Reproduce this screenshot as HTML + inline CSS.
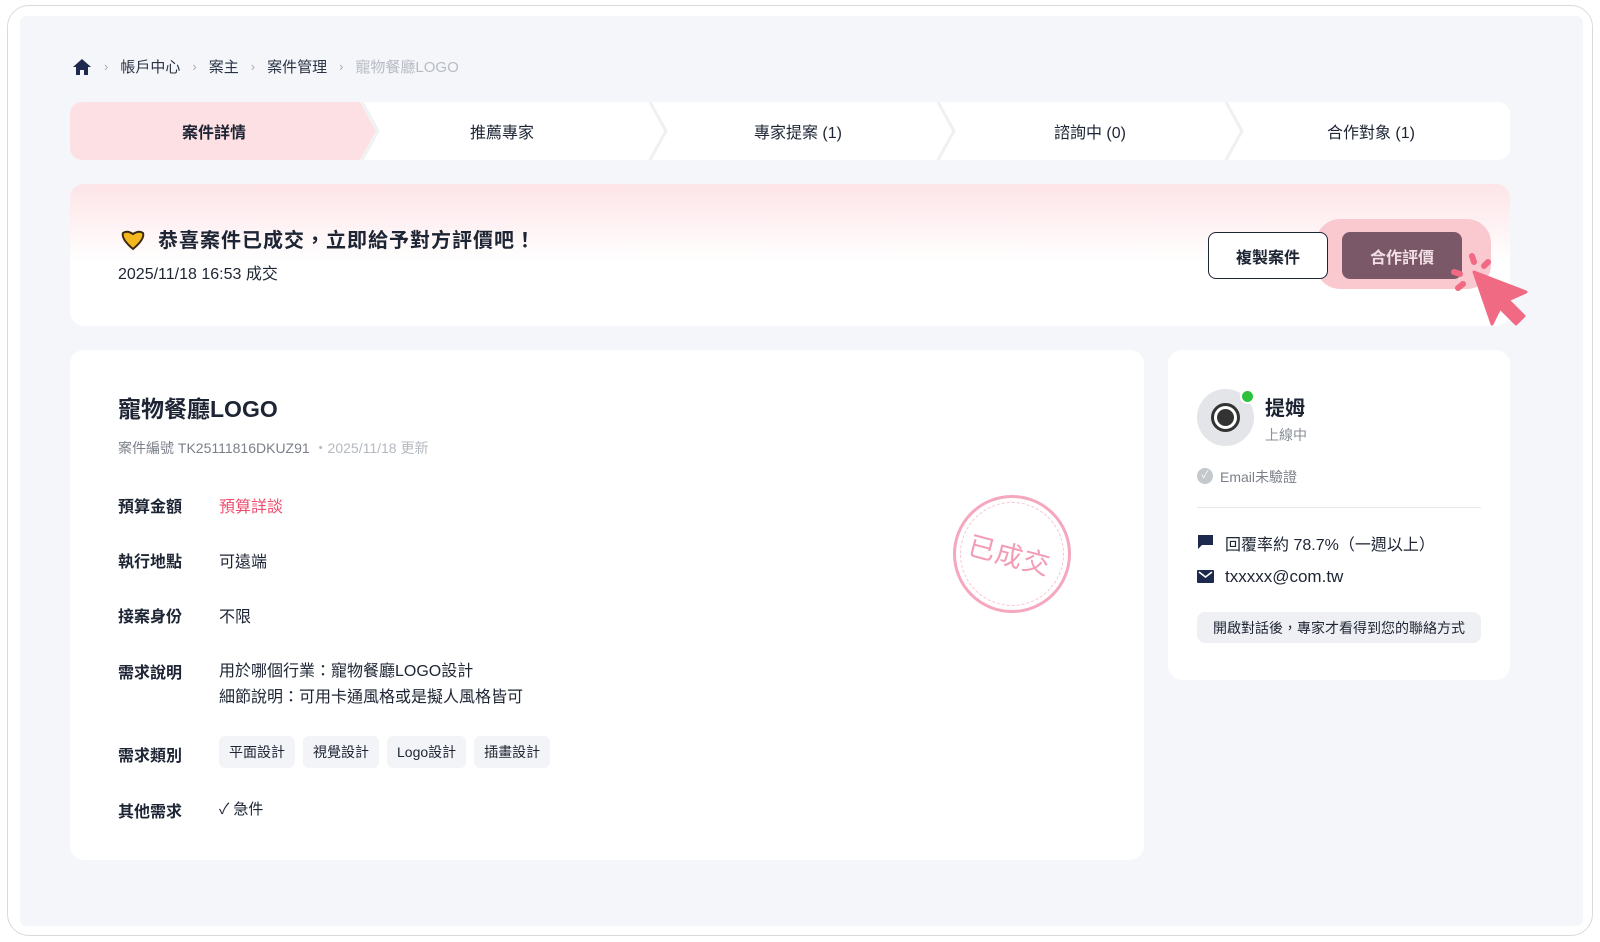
<!DOCTYPE html>
<html><head><meta charset="utf-8"><style>
*{box-sizing:border-box;margin:0;padding:0}
body{width:1600px;height:942px;background:#fff;font-family:"Liberation Sans","Noto Sans CJK TC",sans-serif;color:#1d2433;position:relative;overflow:hidden}
.frame{position:absolute;left:7px;top:5px;width:1586px;height:931px;border:1.5px solid #d8dadd;border-radius:22px;background:#fff}
.inner{position:absolute;left:20px;top:16px;width:1563px;height:910px;background:#f4f6f9;border-radius:6px}
.abs{position:absolute}
.bc{top:56px;left:72px;font-size:15px;color:#2a3245;display:flex;align-items:center;gap:12px}
.bc .sep{color:#aab;font-size:13px}
.tabs{top:102px;left:70px;width:1440px;height:58px;background:#fff;border-radius:12px;overflow:hidden}
.tab{position:absolute;top:0;height:58px;width:288px;display:flex;align-items:center;justify-content:center;font-size:16px;color:#1d2433}
.banner{top:184px;left:70px;width:1440px;height:142px;border-radius:14px;background:linear-gradient(#fde4e7 0%,#fff 55%)}
.card{background:#fff;border-radius:14px}
.lbl{position:absolute;left:48px;font-weight:bold;font-size:16px}
.val{position:absolute;left:149px;font-size:16px}
.tag{display:inline-block;background:#f2f4f7;border-radius:6px;padding:6px 10px;font-size:14px;margin-right:8px}
</style></head><body>
<div class="frame"></div>
<div class="inner"></div>

<div class="abs bc">
<svg width="20" height="18" viewBox="0 0 20 18"><path d="M10 1 L19 9 H16 V17 H12 V12 H8 V17 H4 V9 H1 Z" fill="#1d2a4d"/></svg>
<span class="sep">›</span><span>帳戶中心</span><span class="sep">›</span><span>案主</span><span class="sep">›</span><span>案件管理</span><span class="sep">›</span><span style="color:#b8bcc4">寵物餐廳LOGO</span>
</div>

<div class="abs tabs">
<svg class="abs" style="left:0;top:0" width="1440" height="58">
<path d="M0 0 H290 L306 29 L290 58 H0 Z" fill="#fde0e3"/>
<g fill="none" stroke="#eef0f3" stroke-width="3">
<path d="M580 0 L596 29 L580 58"/><path d="M868 0 L884 29 L868 58"/><path d="M1156 0 L1172 29 L1156 58"/>
<path d="M292 0 L308 29 L292 58" stroke="#f0f1f4"/>
</g></svg>
<div class="tab" style="left:0;font-weight:bold">案件詳情</div>
<div class="tab" style="left:288px">推薦專家</div>
<div class="tab" style="left:576px;width:304px">專家提案 (1)</div>
<div class="tab" style="left:864px;width:312px">諮詢中 (0)</div>
<div class="tab" style="left:1152px;width:298px">合作對象 (1)</div>
</div>

<div class="abs banner">
<svg class="abs" style="left:50px;top:45px" width="26" height="22" viewBox="0 0 26 22"><path d="M3 4 Q7 1 13 5 Q19 1 23 4 Q25 10 13 20 Q1 10 3 4Z" fill="#f4b81f" stroke="#3a2a10" stroke-width="2"/></svg>
<div class="abs" style="left:88px;top:40px;font-size:20px;font-weight:bold;letter-spacing:1px">恭喜案件已成交，立即給予對方評價吧！</div>
<div class="abs" style="left:48px;top:76px;font-size:16px">2025/11/18 16:53 成交</div>
</div>
<div class="abs" style="left:1316px;top:219px;width:175px;height:70px;border-radius:24px;background:#fac9d0"></div>
<div class="abs" style="left:1208px;top:232px;width:120px;height:47px;border:1.5px solid #1d2433;border-radius:8px;background:#fff;display:flex;align-items:center;justify-content:center;font-weight:bold;font-size:16px">複製案件</div>
<div class="abs" style="left:1342px;top:232px;width:120px;height:47px;border-radius:8px;background:#7a5868;display:flex;align-items:center;justify-content:center;font-weight:bold;font-size:16px;color:#f2dfe5">合作評價</div>
<svg class="abs" style="left:1450px;top:250px" width="90" height="80" viewBox="0 0 90 80">
<g stroke="#f06a83" stroke-width="6" stroke-linecap="round"><path d="M22 6 L24 12"/><path d="M38 12 L34 16"/><path d="M4 22 L10 24"/><path d="M8 38 L13 34"/></g>
<path d="M24 22 L76 42 L58 50 L74 66 L66 74 L50 58 L42 74 Z" fill="#f06a83" stroke="#f06a83" stroke-width="3" stroke-linejoin="round"/>
</svg>

<div class="abs card" style="left:70px;top:350px;width:1074px;height:510px">
<div class="abs" style="left:48px;top:40px;font-size:23px;font-weight:bold">寵物餐廳LOGO</div>
<div class="abs" style="left:48px;top:88px;font-size:14px;color:#7b808a">案件編號 TK25111816DKUZ91 <span style="color:#b4b8c0">・2025/11/18 更新</span></div>
<div class="lbl" style="top:143px">預算金額</div><div class="val" style="top:143px;color:#ee4f6e">預算詳談</div>
<div class="lbl" style="top:198px">執行地點</div><div class="val" style="top:198px">可遠端</div>
<div class="lbl" style="top:253px">接案身份</div><div class="val" style="top:253px">不限</div>
<div class="lbl" style="top:309px">需求說明</div><div class="val" style="top:309px;line-height:26px">用於哪個行業：寵物餐廳LOGO設計<br>細節說明：可用卡通風格或是擬人風格皆可</div>
<div class="lbl" style="top:392px">需求類別</div><div class="val" style="top:386px;left:149px"><span class="tag">平面設計</span><span class="tag">視覺設計</span><span class="tag">Logo設計</span><span class="tag">插畫設計</span></div>
<div class="lbl" style="top:448px">其他需求</div><div class="val" style="top:448px;font-size:15px">✓ 急件</div>
<div class="abs" style="left:883px;top:145px;width:118px;height:118px;border-radius:50%;border:3px solid #f4a7bd">
<div class="abs" style="left:4px;top:4px;width:104px;height:104px;border-radius:50%;border:1.5px dashed #f7c4d2"></div>
<div class="abs" style="left:12px;top:36px;font-size:27px;color:#f29cb6;transform:rotate(15deg);letter-spacing:1px">已成交</div>
</div>
</div>

<div class="abs card" style="left:1168px;top:350px;width:342px;height:330px">
<div class="abs" style="left:29px;top:39px;width:57px;height:57px;border-radius:50%;background:#e3e5e8">
<div class="abs" style="left:14px;top:14px;width:29px;height:29px;border-radius:50%;border:3px solid #333;background:#fff"></div>
<div class="abs" style="left:20px;top:20px;width:17px;height:17px;border-radius:50%;background:#333"></div>
</div>
<div class="abs" style="left:72px;top:39px;width:15px;height:15px;border-radius:50%;background:#2dc13c;border:2px solid #fff"></div>
<div class="abs" style="left:97px;top:42px;font-size:20px;font-weight:bold">提姆</div>
<div class="abs" style="left:97px;top:75px;font-size:14px;color:#8a8f98">上線中</div>
<div class="abs" style="left:29px;top:118px;width:16px;height:16px;border-radius:50%;background:#c4c7cc;color:#fff;font-size:10px;text-align:center;line-height:16px">✓</div>
<div class="abs" style="left:52px;top:117px;font-size:14px;color:#7b808a">Email未驗證</div>
<div class="abs" style="left:29px;top:157px;width:284px;height:1px;background:#e6e8eb"></div>
<svg class="abs" style="left:29px;top:184px" width="17" height="16" viewBox="0 0 17 16"><path d="M1 1 H16 V11 H5 L1 15Z" fill="#1d2a4d"/></svg>
<div class="abs" style="left:57px;top:181px;font-size:16px">回覆率約 78.7%（一週以上）</div>
<svg class="abs" style="left:29px;top:220px" width="17" height="13" viewBox="0 0 17 13"><rect width="17" height="13" rx="1" fill="#1d2a4d"/><path d="M2 2 L8.5 7 L15 2" stroke="#fff" stroke-width="1.6" fill="none"/></svg>
<div class="abs" style="left:57px;top:217px;font-size:17px">txxxxx@com.tw</div>
<div class="abs" style="left:29px;top:262px;width:284px;height:31px;border-radius:8px;background:#eef0f3;font-size:14px;display:flex;align-items:center;justify-content:center">開啟對話後，專家才看得到您的聯絡方式</div>
</div>
</body></html>
